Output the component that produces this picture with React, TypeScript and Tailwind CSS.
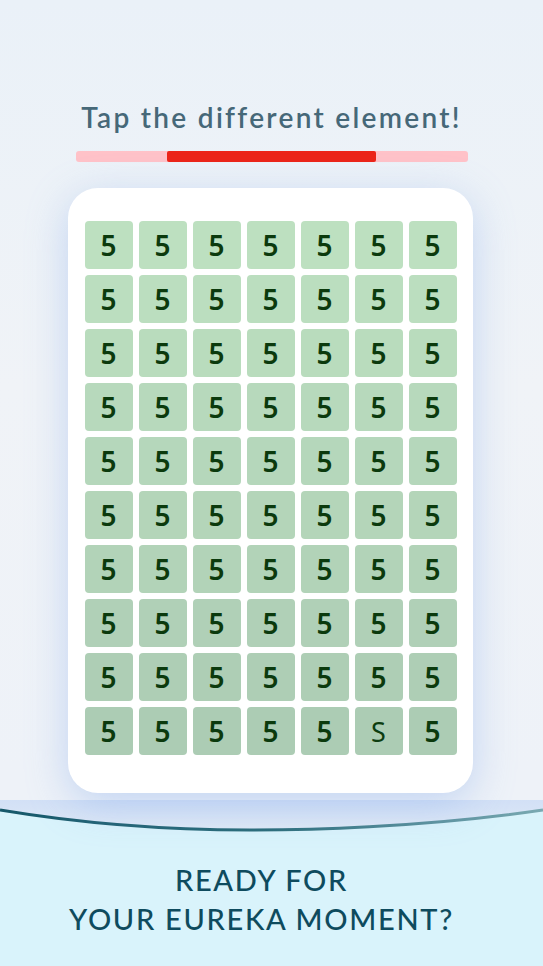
import React from "react";

const ROWS = 10;
const COLS = 7;

function rowColor(r: number) {
  const t = r / (ROWS - 1);
  const a = [189, 224, 192];
  const b = [172, 204, 180];
  const c = a.map((v, i) => Math.round(v + (b[i] - v) * t));
  return `rgb(${c[0]},${c[1]},${c[2]})`;
}

export default function App() {
  return (
    <div
      className="relative w-[543px] h-[966px] overflow-hidden flex flex-col items-center bg-[linear-gradient(180deg,#eaf1f8_0%,#f0f3f7_40%,#eef2f8_80%)]"
      style={{ fontFamily: '"Lato", "Open Sans", sans-serif' }}
    >
      <h1 className="mt-[100px] text-[28px] leading-[34px] font-semibold tracking-[2.3px] text-[#466878]">
        Tap the different element!
      </h1>
      <div className="mt-[17px] w-[392px] h-[11px] rounded-[3px] bg-[#ffc2c8] flex">
        <div className="ml-[91px] w-[209px] h-[11px] rounded-[2px] bg-[#ec2418]" />
      </div>
      <div className="mt-[26px] ml-[-3px] w-[405px] h-[605px] rounded-[30px] bg-white pt-[33px] pl-[17px] pr-[16px] shadow-[0_10px_40px_rgba(140,175,235,0.45)] relative z-10">
        <div className="grid grid-cols-[repeat(7,48px)] auto-rows-[48px] gap-[6px]">
          {Array.from({ length: ROWS * COLS }).map((_, i) => {
            const r = Math.floor(i / COLS);
            const isOdd = r === 9 && i % COLS === 5;
            return (
              <div
                key={i}
                className="rounded-[4px] flex items-center justify-center"
                style={{ backgroundColor: rowColor(r) }}
              >
                {isOdd ? (
                  <span className="text-[27px] leading-none font-normal text-[#0d3d10]" style={{ fontFamily: '"Noto Sans", sans-serif' }}>S</span>
                ) : (
                  <span className="text-[28px] leading-none font-semibold text-[#0b3a0d]" style={{ fontFamily: '"Noto Sans", sans-serif' }}>5</span>
                )}
              </div>
            );
          })}
        </div>
      </div>
      <div className="relative mt-[7px] w-[543px] flex-1 flex flex-col items-center">
        <svg className="absolute left-0 top-0" width="543" height="45" viewBox="0 0 543 45">
          <defs>
            <linearGradient id="ln" x1="0" y1="0" x2="1" y2="0">
              <stop offset="0" stopColor="#16586a" />
              <stop offset="0.5" stopColor="#2a6c7a" />
              <stop offset="1" stopColor="#7aa9b2" />
            </linearGradient>
            <linearGradient id="glow" x1="0" y1="0" x2="0" y2="1">
              <stop offset="0" stopColor="#d2e0f6" />
              <stop offset="1" stopColor="#dfe9f6" />
            </linearGradient>
          </defs>
          <path d="M0 0 H543 V10 C420 28 300 30 250 30 C150 30 60 20 0 10 Z" fill="url(#glow)" />
          <path d="M0 10 C60 20 150 30 250 30 C300 30 420 28 543 10 V45 H0 Z" fill="#d9f3fb" />
          <path d="M0 10 C60 20 150 30 250 30 C300 30 420 28 543 10" fill="none" stroke="url(#ln)" strokeWidth="3" />
        </svg>
        <div className="absolute left-0 right-0 top-[45px] bottom-0 bg-[#d9f3fb]" />
        <div className="relative mt-[60px] mr-[20px] text-center text-[29px] leading-[39px] font-medium tracking-[1.7px] text-[#0e4b5e]">
          <div>READY FOR</div>
          <div>YOUR EUREKA MOMENT?</div>
        </div>
      </div>
    </div>
  );
}
